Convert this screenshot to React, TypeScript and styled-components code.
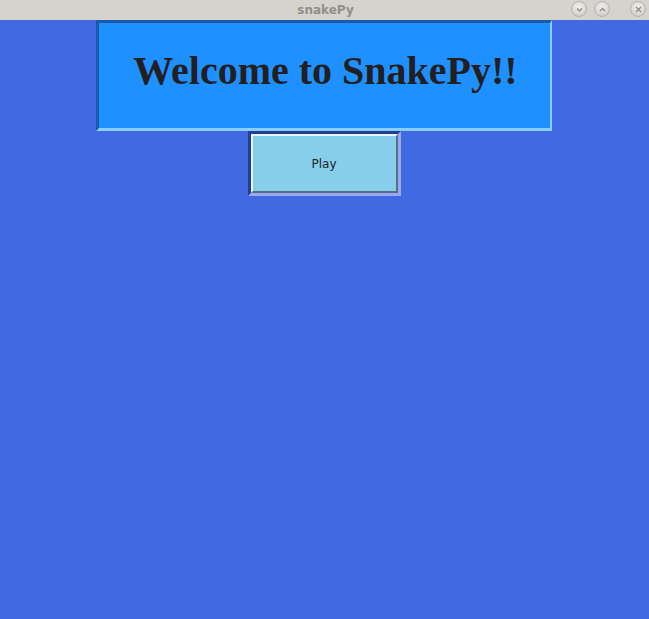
import React from "react";
import styled, { createGlobalStyle } from "styled-components";

const Global = createGlobalStyle`
  html, body { margin: 0; padding: 0; background: #4169e1; }
  body { width: 649px; height: 619px; overflow: hidden; }
`;

const Window = styled.div`
  width: 649px;
  height: 619px;
  display: flex;
  flex-direction: column;
  background: #4169e1;
`;

const TitleBar = styled.div`
  height: 20px;
  flex: none;
  background: #d6d2ce;
  position: relative;
  display: flex;
  align-items: center;
  justify-content: center;
`;

const Title = styled.span`
  font-family: "DejaVu Sans", sans-serif;
  font-weight: bold;
  font-size: 12px;
  color: #908e8c;
  letter-spacing: 0px;
  margin-left: 2px;
`;

const Controls = styled.div`
  position: absolute;
  right: 3px;
  top: 1px;
  display: flex;
  gap: 7px;
`;

const Ctl = styled.div<{ $gap?: number }>`
  width: 16px;
  height: 16px;
  margin-left: ${(p) => p.$gap ?? 0}px;
  border-radius: 50%;
  background: radial-gradient(circle at 50% 35%, #f2f0ee, #c9c5c1);
  border: 1px solid #b5b1ad;
  box-sizing: border-box;
  display: flex;
  align-items: center;
  justify-content: center;
`;

const Content = styled.div`
  display: flex;
  flex-direction: column;
  align-items: center;
  padding-right: 1px;
`;

const Header = styled.div`
  width: 456px;
  height: 111px;
  box-sizing: border-box;
  background: #1e90ff;
  border-style: solid;
  border-width: 3px 2px 3px 3px;
  border-color: #1a5aa6 #87cefa #87cefa #1a5aa6;
  display: flex;
  align-items: center;
  justify-content: center;
`;

const Heading = styled.h1`
  margin: 0 0 10px 2px;
  font-family: "Liberation Serif", "Times New Roman", serif;
  font-weight: bold;
  font-size: 40px;
  color: #231f20;
`;

const ButtonFrame = styled.div`
  width: 153px;
  height: 65px;
  box-sizing: border-box;
  border-style: solid;
  border-width: 3px 3px 3px 3px;
  border-color: #233e93 #9aa8f2 #9aa8f2 #233e93;
  display: flex;
`;

const PlayButton = styled.button`
  flex: 1;
  margin: 0;
  padding: 0;
  background: #87ceeb;
  border-style: solid;
  border-width: 2px;
  border-color: #e2f6fb #55707a #55707a #e2f6fb;
  font-family: "DejaVu Sans", sans-serif;
  font-size: 12px;
  color: #222;
  cursor: pointer;
`;

function Chevron({ up }: { up?: boolean }) {
  return (
    <svg width="9" height="9" viewBox="0 0 9 9">
      <path
        d={up ? "M2 6 L4.5 3.5 L7 6" : "M2 3.5 L4.5 6 L7 3.5"}
        fill="none"
        stroke="#8d8985"
        strokeWidth="1.3"
      />
    </svg>
  );
}

function Cross() {
  return (
    <svg width="9" height="9" viewBox="0 0 9 9">
      <path d="M2 2 L7 7 M7 2 L2 7" stroke="#8d8985" strokeWidth="1.3" />
    </svg>
  );
}

export default function App() {
  return (
    <>
      <Global />
      <Window>
        <TitleBar>
          <Title>snakePy</Title>
          <Controls>
            <Ctl><Chevron /></Ctl>
            <Ctl><Chevron up /></Ctl>
            <Ctl $gap={13}><Cross /></Ctl>
          </Controls>
        </TitleBar>
        <Content>
          <Header>
            <Heading>Welcome to SnakePy!!</Heading>
          </Header>
          <ButtonFrame>
            <PlayButton>Play</PlayButton>
          </ButtonFrame>
        </Content>
      </Window>
    </>
  );
}
